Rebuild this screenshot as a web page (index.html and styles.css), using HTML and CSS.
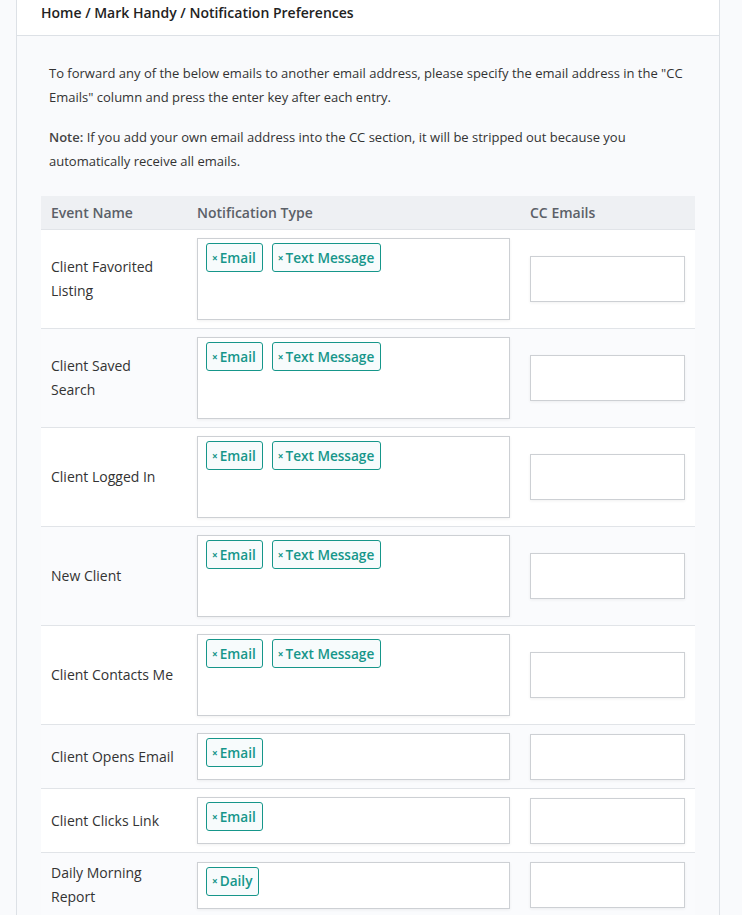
FILE: index.html
```html
<!DOCTYPE html>
<html>
<head>
<meta charset="utf-8">
<link rel="stylesheet" href="styles.css">
</head>
<body>
<div class="card">
  <div class="card-header">Home / Mark Handy / Notification Preferences</div>
  <div class="card-body">
    <p class="info">To forward any of the below emails to another email address, please specify the email address in the "CC Emails" column and press the enter key after each entry.</p>
    <p class="info"><strong>Note:</strong> If you add your own email address into the CC section, it will be stripped out because you automatically receive all emails.</p>
    <table class="prefs">
      <thead>
        <tr><th class="c1">Event Name</th><th class="c2">Notification Type</th><th class="c3">CC Emails</th></tr>
      </thead>
      <tbody>
        <tr>
          <td class="c1">Client Favorited Listing</td>
          <td class="c2"><div class="tags tall"><span class="tag"><span class="x">×</span>Email</span><span class="tag"><span class="x">×</span>Text Message</span></div></td>
          <td class="c3"><div class="cc"></div></td>
        </tr>
        <tr>
          <td class="c1">Client Saved Search</td>
          <td class="c2"><div class="tags tall"><span class="tag"><span class="x">×</span>Email</span><span class="tag"><span class="x">×</span>Text Message</span></div></td>
          <td class="c3"><div class="cc"></div></td>
        </tr>
        <tr>
          <td class="c1">Client Logged In</td>
          <td class="c2"><div class="tags tall"><span class="tag"><span class="x">×</span>Email</span><span class="tag"><span class="x">×</span>Text Message</span></div></td>
          <td class="c3"><div class="cc"></div></td>
        </tr>
        <tr>
          <td class="c1">New Client</td>
          <td class="c2"><div class="tags tall"><span class="tag"><span class="x">×</span>Email</span><span class="tag"><span class="x">×</span>Text Message</span></div></td>
          <td class="c3"><div class="cc"></div></td>
        </tr>
        <tr>
          <td class="c1">Client Contacts Me</td>
          <td class="c2"><div class="tags tall"><span class="tag"><span class="x">×</span>Email</span><span class="tag"><span class="x">×</span>Text Message</span></div></td>
          <td class="c3"><div class="cc"></div></td>
        </tr>
        <tr>
          <td class="c1">Client Opens Email</td>
          <td class="c2"><div class="tags"><span class="tag"><span class="x">×</span>Email</span></div></td>
          <td class="c3"><div class="cc"></div></td>
        </tr>
        <tr>
          <td class="c1">Client Clicks Link</td>
          <td class="c2"><div class="tags"><span class="tag"><span class="x">×</span>Email</span></div></td>
          <td class="c3"><div class="cc"></div></td>
        </tr>
        <tr>
          <td class="c1">Daily Morning Report</td>
          <td class="c2"><div class="tags"><span class="tag"><span class="x">×</span>Daily</span></div></td>
          <td class="c3"><div class="cc"></div></td>
        </tr>
      </tbody>
    </table>
  </div>
</div>
</body>
</html>
```
FILE: styles.css
```css
html, body {
  margin: 0;
  padding: 0;
  background: #f9fafc;
  font-family: "Open Sans", "Noto Sans", sans-serif;
  color: #333;
}
.card {
  margin: 0 22px 0 16px;
  border-left: 1px solid #dde1e6;
  border-right: 1px solid #dde1e6;
  background: #f9fafc;
  min-height: 915px;
}
.card-header {
  background: #fff;
  padding: 3px 24px 12px;
  line-height: 20px;
  font-size: 14px;
  font-weight: 600;
  color: #222;
  border-bottom: 1px solid #dde1e6;
}
.card-body {
  padding: 25px 23px 0 24px;
}
.info {
  margin: 0 0 16px;
  padding: 0 8px;
  font-size: 13px;
  line-height: 24px;
  color: #333;
}
.info strong { font-weight: 600; color: #444; }
.info + .info { margin-bottom: 23px; }
.prefs {
  width: 654px;
  border-collapse: collapse;
  table-layout: fixed;
}
.prefs th {
  background: #eef0f3;
  height: 33px;
  padding: 0 10px;
  text-align: left;
  font-size: 14px;
  font-weight: 600;
  color: #5b6068;
  border-bottom: 1px solid #e1e4e8;
}
.prefs th.c1 { width: 126px; }
.prefs th.c2 { width: 313px; }
.prefs th.c3 { width: 155px; }
.prefs td {
  padding: 8px 10px 8px;
  border-top: 1px solid #e1e4e8;
  vertical-align: middle;
  font-size: 14px;
  line-height: 24px;
  color: #333;
}
.prefs thead + tbody tr:first-child td { border-top: 0; }
.prefs tbody tr:nth-child(odd) td { background: #fff; }
.prefs tbody tr:nth-child(even) td { background: #fafbfd; }
.tags {
  box-sizing: border-box;
  height: 47px;
  border: 1px solid #cdd0d4;
  background: #fff;
  box-shadow: 0 1px 3px rgba(0, 0, 0, 0.06);
  padding: 4px 8px;
  display: flex;
  align-items: flex-start;
  gap: 9px;
}
.tags.tall { height: 82px; }
.tag {
  display: inline-flex;
  align-items: center;
  box-sizing: border-box;
  height: 29px;
  padding: 0 6px 0 5px;
  border: 1px solid #16968a;
  border-radius: 3px;
  background: #f7fbfc;
  color: #16968a;
  font-size: 13.6px;
  font-weight: 600;
}
.x {
  font-size: 10px;
  font-weight: 700;
  margin-right: 2px;
}
.cc {
  box-sizing: border-box;
  height: 46px;
  border: 1px solid #cdd0d4;
  background: #fff;
  box-shadow: 0 1px 3px rgba(0, 0, 0, 0.06);
}
```
